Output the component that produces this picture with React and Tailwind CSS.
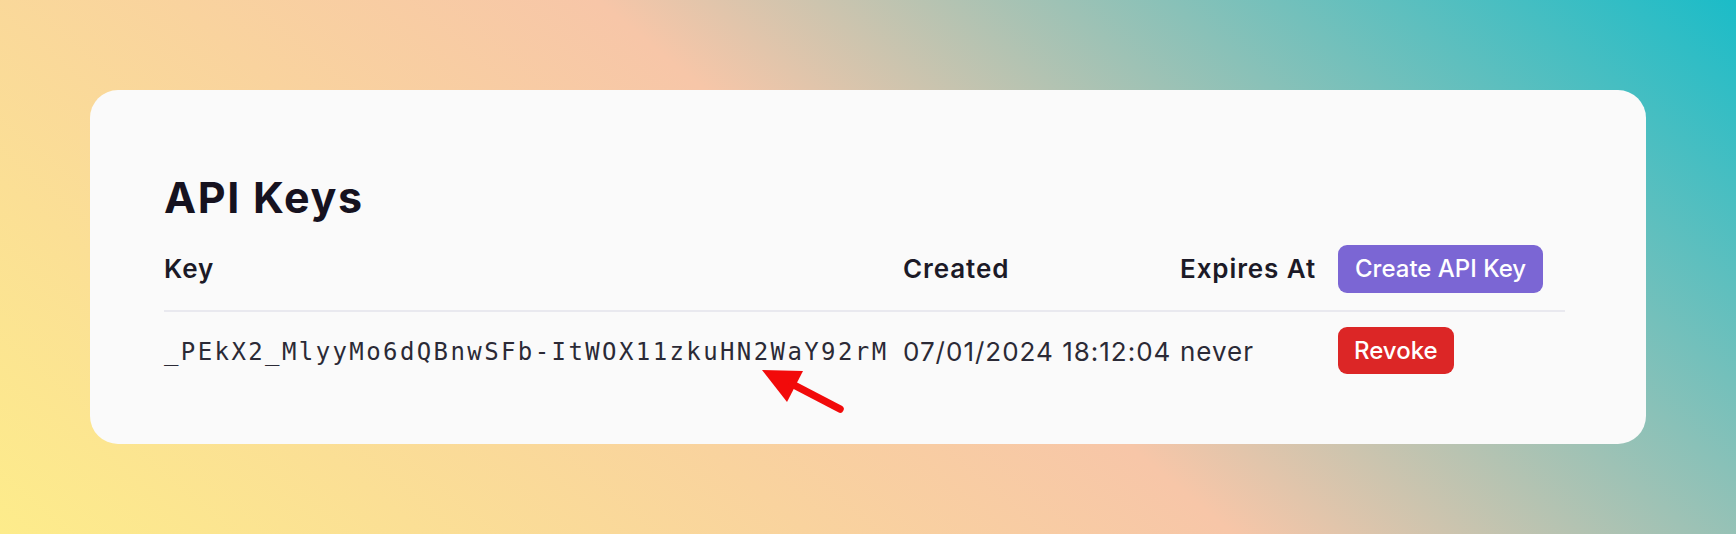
import React from "react";

const ApiKeyRow = ({ apiKey, created, expires, onRevoke }) => (
  <div className="grid grid-cols-[739px_277px_158px_1fr] items-center pt-[15px]">
    <div className="pt-[3px] font-['DejaVu_Sans_Mono',monospace] text-[24px] tracking-[2.4px] leading-none text-[#2b2a36]">
      {apiKey}
    </div>
    <div className="pt-[3px] text-[26px] tracking-[1px] leading-none text-[#2b2a36]">{created}</div>
    <div className="pt-[3px] text-[26px] tracking-[1px] leading-none text-[#2b2a36]">{expires}</div>
    <div>
      <button
        onClick={onRevoke}
        className="h-[47px] px-[16px] rounded-[9px] bg-[#dc2626] text-[24px] font-medium text-white"
      >
        Revoke
      </button>
    </div>
  </div>
);

export default function App() {
  return (
    <div className="w-[1736px] h-[534px] p-[90px] bg-[linear-gradient(40deg,#fdec8b_0%,#f7c6a8_52%,#1bbcc8_100%)] font-['Inter',sans-serif]">
      <div className="relative h-full rounded-[28px] bg-[#fafafa] pt-[86px] pl-[74px] pr-[81px]">
        <h1 className="text-[43px] tracking-[1.7px] leading-none font-bold text-[#16121f]">API Keys</h1>

        {/* Table header */}
        <div className="mt-[26px] grid grid-cols-[739px_277px_158px_1fr] items-center pb-[17px] border-b-2 border-[#e9e9ef] text-[26px] tracking-[0.9px] font-semibold leading-none text-[#1c1a27]">
          <div>Key</div>
          <div>Created</div>
          <div>Expires At</div>
          <div>
            <button className="h-[48px] px-[17px] rounded-[9px] bg-[#7b66d4] text-[24px] tracking-normal font-medium text-white">
              Create API Key
            </button>
          </div>
        </div>

        <ApiKeyRow
          apiKey="_PEkX2_MlyyMo6dQBnwSFb-ItWOX11zkuHN2WaY92rM"
          created="07/01/2024 18:12:04"
          expires="never"
        />

        {/* Annotation arrow */}
        <svg
          className="absolute left-[668px] top-[276px]"
          width="90"
          height="52"
          viewBox="0 0 90 52"
        >
          <polygon points="4,4 45,5 29,36" fill="#f20a0a" />
          <line
            x1="34"
            y1="18"
            x2="82"
            y2="43"
            stroke="#f20a0a"
            strokeWidth="7.5"
            strokeLinecap="round"
          />
        </svg>
      </div>
    </div>
  );
}
